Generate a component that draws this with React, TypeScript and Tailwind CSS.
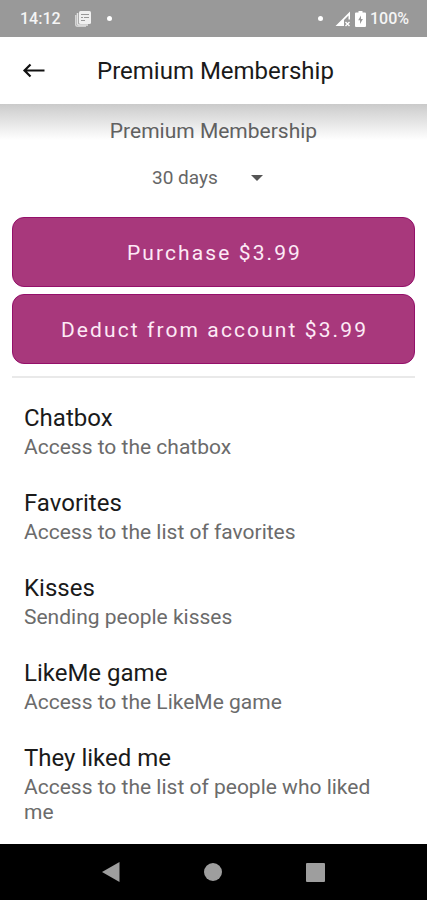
import { useState } from "react";

const features = [
  { title: "Chatbox", description: "Access to the chatbox" },
  { title: "Favorites", description: "Access to the list of favorites" },
  { title: "Kisses", description: "Sending people kisses" },
  { title: "LikeMe game", description: "Access to the LikeMe game" },
  { title: "They liked me", description: "Access to the list of people who liked me" },
];

function StatusBar() {
  return (
    <div className="flex h-[37px] items-center justify-between bg-[#999999] pl-5 pr-[18px] text-base font-medium text-[#f5f5f5]">
      <div className="flex items-center">
        <span>14:12</span>
        <svg className="ml-3.5 h-4 w-4" viewBox="0 0 16 16" fill="none">
          <rect x="4" y="0" width="12" height="13" rx="1.5" fill="#f0f0f0" />
          <path d="M2.500 2v10.500a1.500 1.500 0 0 0 1.500 1.500h9" stroke="#e4e4e4" strokeWidth="1.5" />
          <path d="M0.800 4v10a1.200 1.200 0 0 0 1.200 1.200h9" stroke="#e4e4e4" strokeWidth="1.2" />
          <path d="M6 3.500h8M9 6.500h5M6 6.500h2M6 9.500h4" stroke="#999999" strokeWidth="1" />
        </svg>
        <span className="ml-4 h-[5px] w-[5px] rounded-full bg-white" />
      </div>
      <div className="flex items-center">
        <span className="mr-3 h-[5px] w-[5px] rounded-full bg-white" />
        <svg className="h-4 w-4" viewBox="0 0 16 16">
          <path d="M15 0.500v8h-1.500V4.500L9 9v6H0.500z" fill="white" />
          <path d="M10.500 11l4 4M14.500 11l-4 4" stroke="white" strokeWidth="1.400" />
        </svg>
        <svg className="ml-1 mr-1 h-4 w-[11px]" viewBox="0 0 11 16">
          <path fillRule="evenodd" d="M3.500 0h4v1.500h2.500a1 1 0 0 1 1 1V15a1 1 0 0 1-1 1H1a1 1 0 0 1-1-1V2.500a1 1 0 0 1 1-1h2.500zM6 4.500L3.200 9.200h1.800V13l2.900-4.900H6z" fill="white" />
        </svg>
        <span>100%</span>
      </div>
    </div>
  );
}

function NavigationBar() {
  return (
    <nav className="flex h-14 items-center justify-center gap-[84px] bg-black">
      <button aria-label="Back">
        <svg className="h-5 w-[18px]" viewBox="0 0 18 20">
          <path d="M17.500 0v20L0 10z" fill="#9e9e9e" />
        </svg>
      </button>
      <button aria-label="Home">
        <svg className="h-[18px] w-[18px]" viewBox="0 0 18 18">
          <circle cx="9" cy="9" r="9" fill="#9e9e9e" />
        </svg>
      </button>
      <button aria-label="Recent apps">
        <svg className="h-[19px] w-[19px]" viewBox="0 0 19 19">
          <rect width="19" height="19" rx="1" fill="#9e9e9e" />
        </svg>
      </button>
    </nav>
  );
}

export default function App() {
  const [period, setPeriod] = useState("30");

  return (
    <div className="flex min-h-screen flex-col bg-white font-[Roboto,sans-serif] text-[#212121]">
      <StatusBar />

      {/* App bar */}
      <header className="flex h-[67px] items-center pl-[22px]">
        <button aria-label="Go back" className="mr-[51px]">
          <svg className="h-6 w-6" viewBox="0 0 24 24" fill="none" stroke="#111111" strokeWidth="2.2">
            <path d="M22.500 11.500H2.500M8.500 5.500L2.500 11.500L8.500 17.500" />
          </svg>
        </button>
        <h1 className="text-2xl text-[#1a1a1a]">Premium Membership</h1>
      </header>

      <main className="flex-1 bg-[linear-gradient(to_bottom,#cacaca,#d8d8d8_25%,#ffffff)] bg-[length:100%_36px] bg-no-repeat px-3 pt-3">
        <h2 className="text-center text-[21px] leading-[31px] text-[#606060]">Premium Membership</h2>

        <div className="mt-[11px] flex justify-center">
          <div className="relative">
            <select
              aria-label="Membership period"
              value={period}
              onChange={(e) => setPeriod(e.target.value)}
              className="h-10 w-[123px] appearance-none bg-transparent pl-0 text-[19px] text-[#666666]"
            >
              <option value="30">30 days</option>
            </select>
            <svg className="pointer-events-none absolute right-3 top-[17px] h-1.5 w-3" viewBox="0 0 12 6">
              <path d="M0 0h12L6 6z" fill="#555555" />
            </svg>
          </div>
        </div>

        {/* Payment buttons */}
        <div className="mt-[19px] flex flex-col gap-[7px]">
          <button className="h-[70px] rounded-xl border border-[#94106a] bg-[#a8387c] pt-1 pl-0.5 text-[21px] tracking-widest text-[#fdeaf6]">
            Purchase $3.99
          </button>
          <button className="h-[70px] rounded-xl border border-[#94106a] bg-[#a8387c] pt-1 pl-0.5 text-[21px] tracking-widest text-[#fdeaf6]">
            Deduct from account $3.99
          </button>
        </div>

        <hr className="mt-3 border-t-2 border-[#e9e9e9]" />

        {/* Features */}
        <ul className="mt-[23px] flex flex-col gap-[26px] px-3">
          {features.map((feature) => (
            <li key={feature.title}>
              <h3 className="text-2xl leading-[34px] text-[#1a1a1a]">{feature.title}</h3>
              <p className="text-[21px] leading-[25px] text-[#6b6b6b]">{feature.description}</p>
            </li>
          ))}
        </ul>
      </main>

      <NavigationBar />
    </div>
  );
}
